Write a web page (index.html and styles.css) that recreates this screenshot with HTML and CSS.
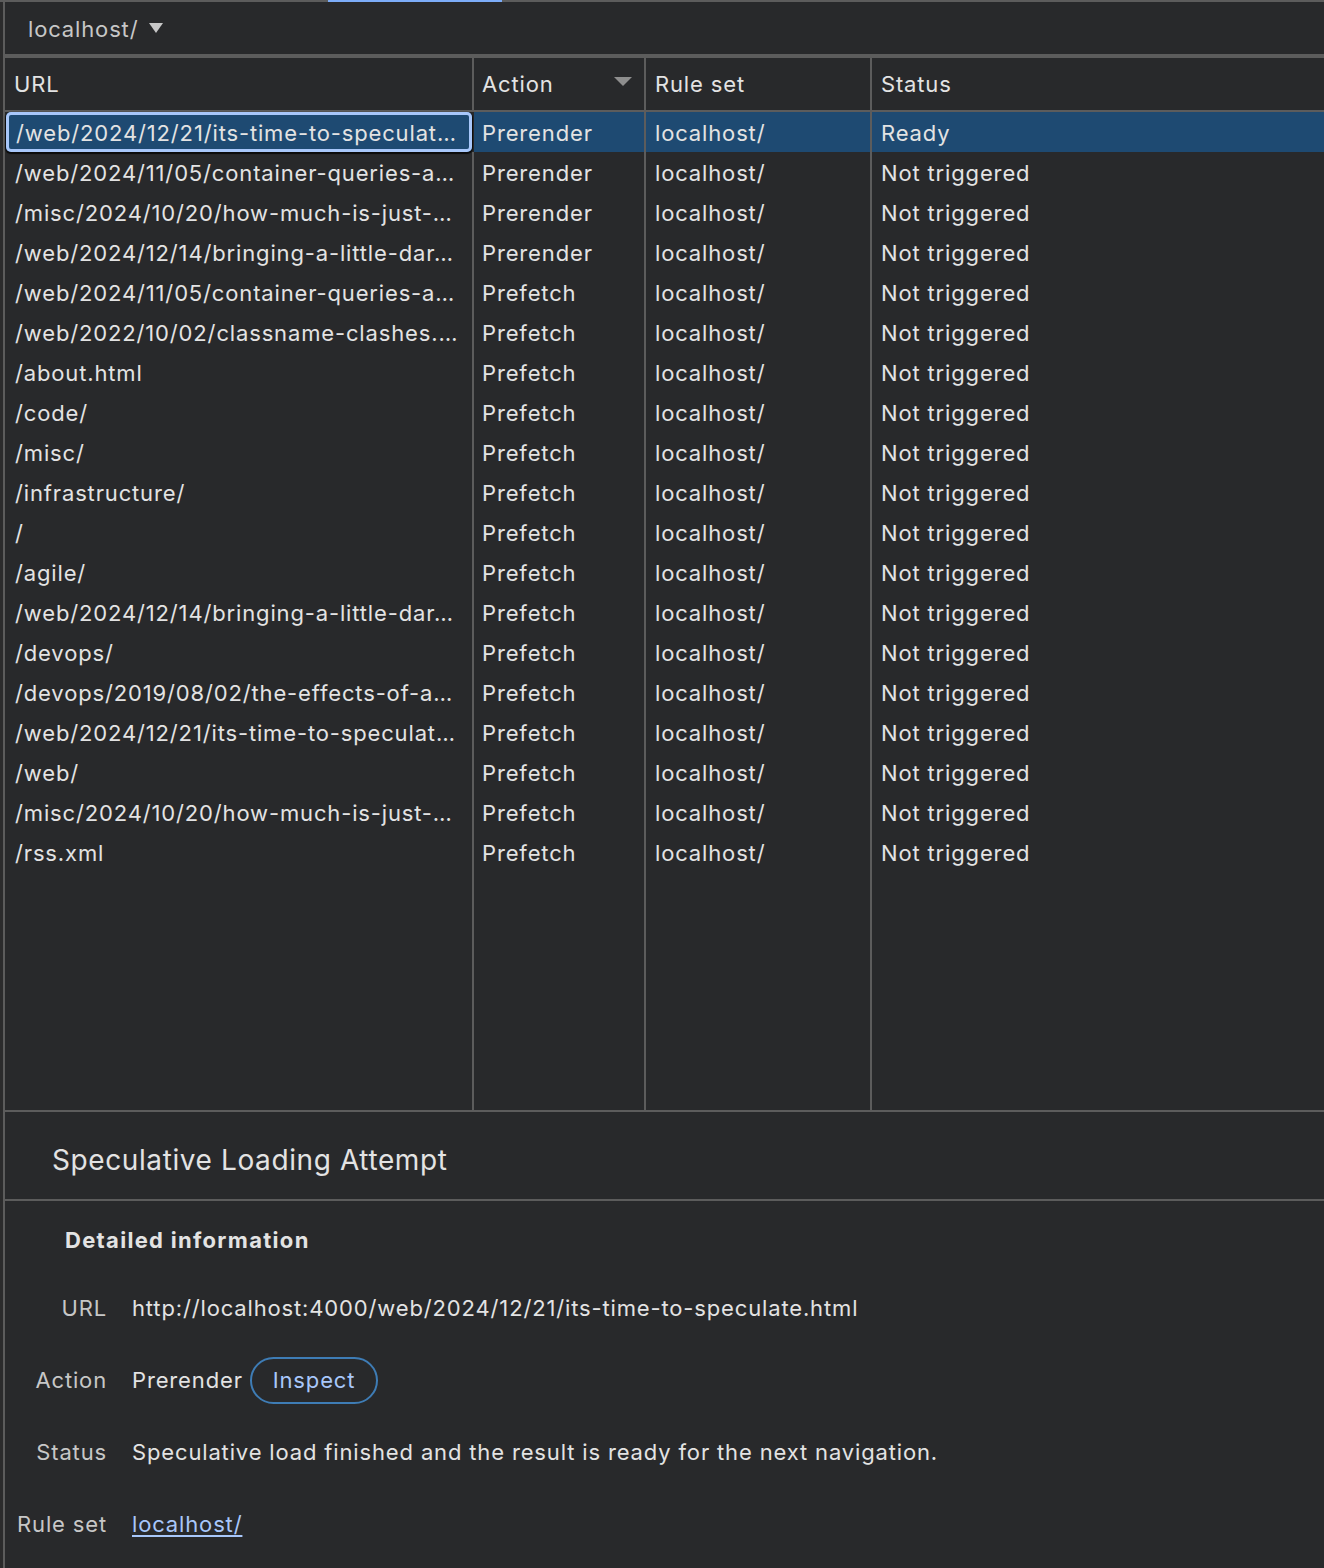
FILE: index.html
```html
<!DOCTYPE html>
<html lang="en">
<head>
<meta charset="utf-8">
<title>Speculative loads</title>
<link rel="stylesheet" href="styles.css">
</head>
<body>
<div class="tabline"><span class="tab-active"></span></div>
<div class="panel">
  <div class="toolbar">
    <span class="select">localhost/</span>
    <svg class="caret" width="14" height="10" viewBox="0 0 14 10"><path d="M0 0H14L7 10Z" fill="#c7c7c7"/></svg>
  </div>
  <div class="grid">
    <div class="hcell">URL</div>
    <div class="hcell sortable"><span>Action</span><svg class="sort" width="18" height="9" viewBox="0 0 18 9"><path d="M0 0H18L9 9Z" fill="#8e8e8e"/></svg></div>
    <div class="hcell">Rule set</div>
    <div class="hcell last">Status</div>

    <div class="cell sel focus">/web/2024/12/21/its-time-to-speculat…</div>
    <div class="cell sel">Prerender</div>
    <div class="cell sel">localhost/</div>
    <div class="cell sel last">Ready</div>

    <div class="cell">/web/2024/11/05/container-queries-a…</div><div class="cell">Prerender</div><div class="cell">localhost/</div><div class="cell last">Not triggered</div>
    <div class="cell">/misc/2024/10/20/how-much-is-just-…</div><div class="cell">Prerender</div><div class="cell">localhost/</div><div class="cell last">Not triggered</div>
    <div class="cell">/web/2024/12/14/bringing-a-little-dar…</div><div class="cell">Prerender</div><div class="cell">localhost/</div><div class="cell last">Not triggered</div>
    <div class="cell">/web/2024/11/05/container-queries-a…</div><div class="cell">Prefetch</div><div class="cell">localhost/</div><div class="cell last">Not triggered</div>
    <div class="cell">/web/2022/10/02/classname-clashes.…</div><div class="cell">Prefetch</div><div class="cell">localhost/</div><div class="cell last">Not triggered</div>
    <div class="cell">/about.html</div><div class="cell">Prefetch</div><div class="cell">localhost/</div><div class="cell last">Not triggered</div>
    <div class="cell">/code/</div><div class="cell">Prefetch</div><div class="cell">localhost/</div><div class="cell last">Not triggered</div>
    <div class="cell">/misc/</div><div class="cell">Prefetch</div><div class="cell">localhost/</div><div class="cell last">Not triggered</div>
    <div class="cell">/infrastructure/</div><div class="cell">Prefetch</div><div class="cell">localhost/</div><div class="cell last">Not triggered</div>
    <div class="cell">/</div><div class="cell">Prefetch</div><div class="cell">localhost/</div><div class="cell last">Not triggered</div>
    <div class="cell">/agile/</div><div class="cell">Prefetch</div><div class="cell">localhost/</div><div class="cell last">Not triggered</div>
    <div class="cell">/web/2024/12/14/bringing-a-little-dar…</div><div class="cell">Prefetch</div><div class="cell">localhost/</div><div class="cell last">Not triggered</div>
    <div class="cell">/devops/</div><div class="cell">Prefetch</div><div class="cell">localhost/</div><div class="cell last">Not triggered</div>
    <div class="cell">/devops/2019/08/02/the-effects-of-a…</div><div class="cell">Prefetch</div><div class="cell">localhost/</div><div class="cell last">Not triggered</div>
    <div class="cell">/web/2024/12/21/its-time-to-speculat…</div><div class="cell">Prefetch</div><div class="cell">localhost/</div><div class="cell last">Not triggered</div>
    <div class="cell">/web/</div><div class="cell">Prefetch</div><div class="cell">localhost/</div><div class="cell last">Not triggered</div>
    <div class="cell">/misc/2024/10/20/how-much-is-just-…</div><div class="cell">Prefetch</div><div class="cell">localhost/</div><div class="cell last">Not triggered</div>
    <div class="cell">/rss.xml</div><div class="cell">Prefetch</div><div class="cell">localhost/</div><div class="cell last">Not triggered</div>

    <div class="filler"></div><div class="filler"></div><div class="filler"></div><div class="filler last"></div>
  </div>

  <div class="title">Speculative Loading Attempt</div>
  <div class="details">
    <div class="heading">Detailed information</div>
    <div class="kv">
      <div class="key">URL</div>
      <div class="val">http://localhost:4000/web/2024/12/21/its-time-to-speculate.html</div>
      <div class="key">Action</div>
      <div class="val"><span>Prerender</span><button class="inspect">Inspect</button></div>
      <div class="key">Status</div>
      <div class="val">Speculative load finished and the result is ready for the next navigation.</div>
      <div class="key">Rule set</div>
      <div class="val"><a class="link" href="#">localhost/</a></div>
    </div>
  </div>
</div>
</body>
</html>
```

FILE: styles.css
```css
html, body {
  margin: 0;
  padding: 0;
  background: #2b2b2c;
}
body {
  font-family: Inter, "Noto Sans", sans-serif;
  font-size: 22px;
  letter-spacing: 0.85px;
  color: #e3e3e3;
  width: 1324px;
  height: 1568px;
  overflow: hidden;
}
.tabline {
  height: 2px;
  background: #5c5c5c;
  position: relative;
}
.tab-active {
  position: absolute;
  left: 328px;
  width: 174px;
  top: 0;
  height: 2px;
  background: #7cacf8;
}
.panel {
  margin-left: 3px;
  border-left: 2px solid #5c5c5c;
  background: #28292b;
  height: 1566px;
  display: flex;
  flex-direction: column;
}
.toolbar {
  height: 52px;
  box-sizing: border-box;
  padding-top: 2px;
  display: flex;
  align-items: center;
  padding-left: 23px;
  gap: 11px;
  color: #c7c7c7;
  flex: none;
}
.caret { margin-top: -2px; }
.grid {
  display: grid;
  grid-template-columns: 469px 172px 226px 1fr;
  grid-template-rows: 54px repeat(19, 40px) 1fr;
  border-top: 4px solid #5c5c5c;
  border-bottom: 2px solid #5c5c5c;
  height: 1058px;
  box-sizing: border-box;
  flex: none;
}
.hcell, .cell, .filler {
  box-sizing: border-box;
  border-right: 2px solid #5c5c5c;
  white-space: nowrap;
  overflow: hidden;
}
.hcell {
  display: flex;
  align-items: center;
  padding-left: 9px;
  border-bottom: 2px solid #5c5c5c;
}
.sortable {
  justify-content: space-between;
  padding-left: 8px;
  padding-right: 12px;
}
.sort { margin-top: -6px; }
.cell {
  display: flex;
  align-items: center;
  padding-left: 9px;
  padding-top: 1px;
}
.cell:nth-child(4n+1) { padding-left: 10px; }
.cell:nth-child(4n+2) { padding-left: 8px; }
.last { border-right: none; }
.sel { background: #1e4a72; }
.focus {
  border-right: none;
  margin-right: 2px;
  background: #1e4a72;
  border-radius: 5px;
  box-shadow: inset 0 0 0 3px #a8c7fa, 0 1px 1px 1px #0b0b0b;
  margin-left: 1px;
  padding-left: 9px;
}
.title {
  height: 89px;
  display: flex;
  align-items: center;
  padding-left: 47px;
  padding-top: 8px;
  box-sizing: border-box;
  font-size: 28px;
  letter-spacing: 0.6px;
  border-bottom: 2px solid #5c5c5c;
  flex: none;
}
.details {
  flex: 1;
}
.heading {
  font-weight: 700;
  letter-spacing: 1.3px;
  padding-left: 60px;
  padding-top: 24px;
  line-height: 30px;
  margin-bottom: 17px;
}
.kv {
  display: grid;
  grid-template-columns: 102px 1fr;
  grid-auto-rows: 72px;
  column-gap: 25px;
  align-items: center;
}
.key {
  text-align: right;
  color: #c7c7c7;
}
.val {
  display: flex;
  align-items: center;
  gap: 7px;
}
.inspect {
  font: inherit;
  letter-spacing: inherit;
  color: #a8c7fa;
  background: transparent;
  border: 2px solid #3e7cb5;
  border-radius: 24px;
  height: 47px;
  padding: 0 21px;
}
.link {
  color: #a8c7fa;
  text-decoration: underline;
  text-underline-offset: 3px;
}
```
